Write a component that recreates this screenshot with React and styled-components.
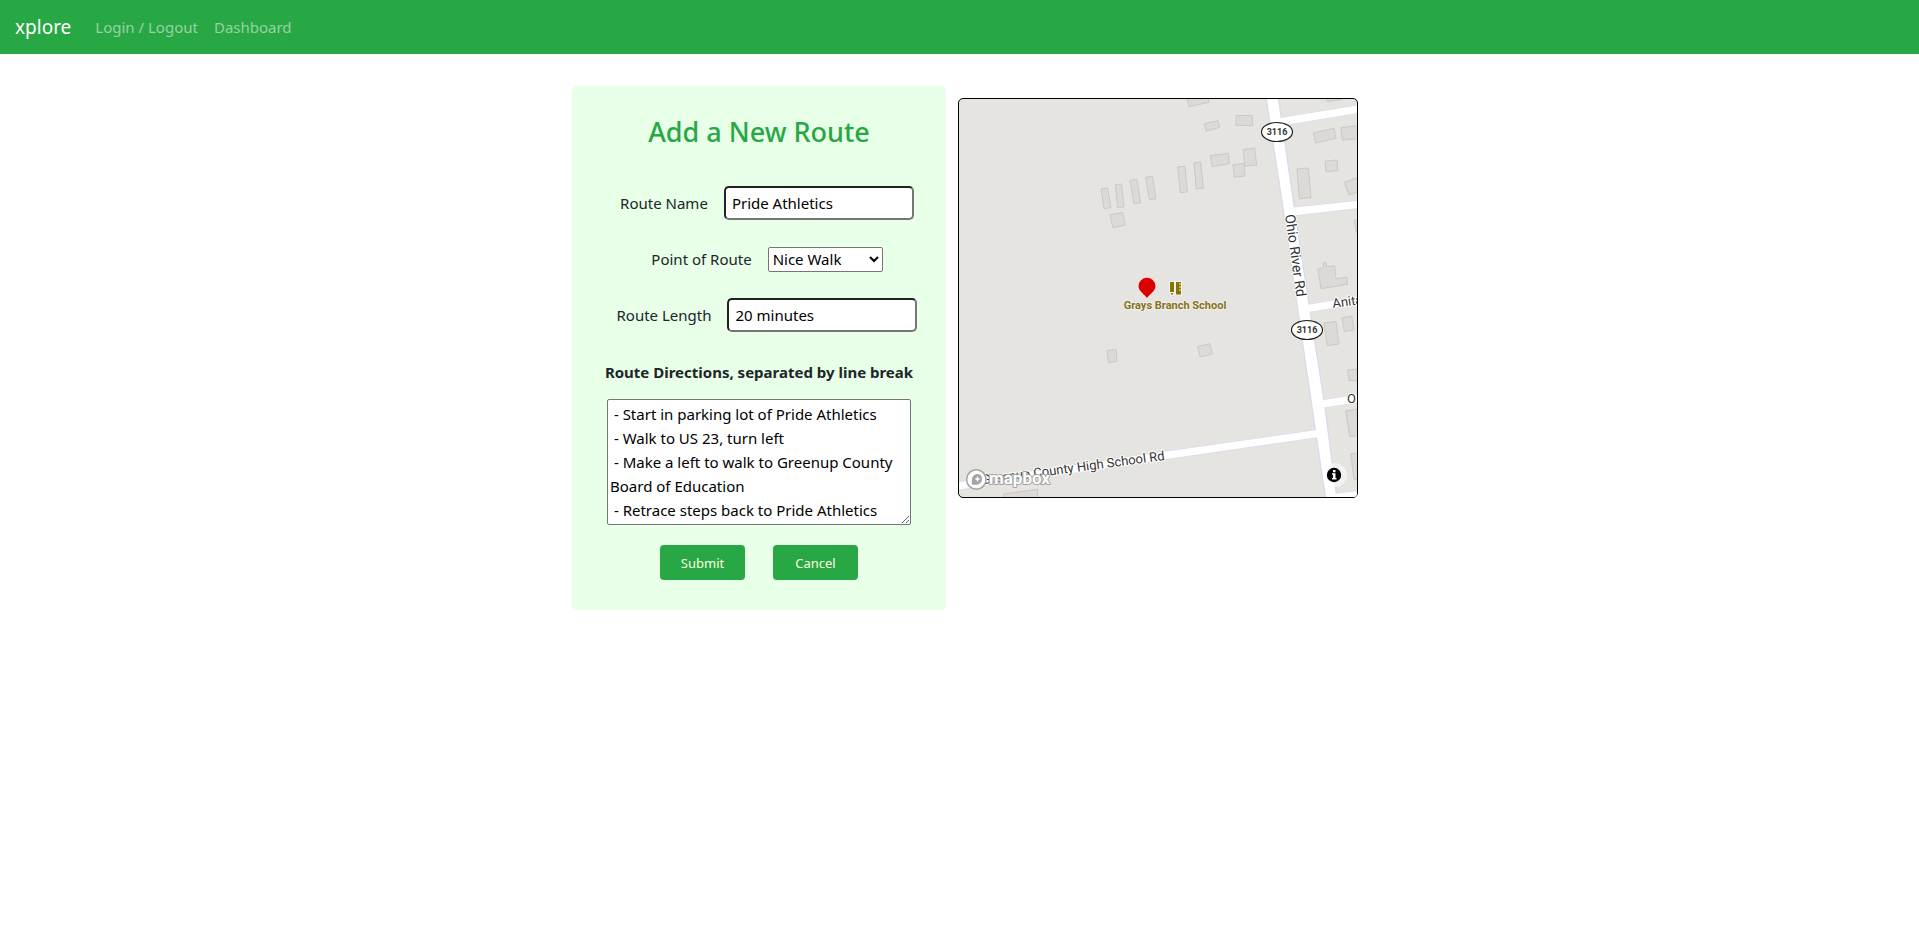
import React from "react";
import styled, { createGlobalStyle } from "styled-components";

const GlobalStyle = createGlobalStyle`
  *, *::before, *::after { box-sizing: border-box; }
  body {
    margin: 0;
    background: #fff;
    color: #212529;
    font: 400 15px/24px "Segoe UI", "Noto Sans", sans-serif;
  }
`;

const Navbar = styled.nav`
  display: flex;
  align-items: center;
  height: 54px;
  padding: 0 15px 1px;
  background: #28a745;
`;

const Brand = styled.a`
  margin-right: 16px;
  color: #fff;
  font-size: 19px;
  line-height: 30px;
  text-decoration: none;
`;

const NavLink = styled.a`
  padding: 8px;
  color: rgba(255, 255, 255, 0.5);
  text-decoration: none;
`;

const Main = styled.main`
  display: flex;
  justify-content: center;
  align-items: flex-start;
  gap: 12px;
  padding: 32px 0 32px 11px;
`;

const RouteForm = styled.form`
  display: flex;
  flex-direction: column;
  align-items: center;
  width: 374px;
  padding: 29px 24px 30px;
  border-radius: 5px;
  background: #e8ffe8;
`;

const Title = styled.h1`
  margin: 0 0 37px;
  color: #28a745;
  font-size: 27px;
  font-weight: 500;
  line-height: 34px;
`;

const FieldRow = styled.div`
  display: flex;
  align-items: center;
  height: 34px;
  margin-bottom: 22px;
`;

const FieldLabel = styled.label`
  margin: 0 16px;
`;

const TextInput = styled.input`
  width: 190px;
  height: 34px;
  padding: 1px 6px;
  border: 2px inset #767676;
  border-radius: 5px;
  background: #fff;
  color: #000;
  font: inherit;
`;

const PointSelect = styled.select`
  width: 115px;
  height: 25px;
  padding: 0;
  border: 1px solid #767676;
  border-radius: 2px;
  background: #fff;
  color: #000;
  font: inherit;
`;

const DirectionsLabel = styled.label`
  margin: 6px 0 15px;
  font-weight: 700;
  white-space: nowrap;
`;

const Directions = styled.textarea`
  display: block;
  width: 304px;
  height: 126px;
  padding: 2px;
  border: 1px solid #767676;
  border-radius: 2px;
  background: #fff;
  color: #000;
  font: inherit;
  overflow: hidden;
`;

const Actions = styled.div`
  display: flex;
  gap: 28px;
  margin-top: 20px;
`;

const ActionButton = styled.button`
  width: 85px;
  height: 35px;
  border: 0;
  border-radius: 4px;
  background: #28a745;
  color: #ffffe0;
  font: inherit;
  font-size: 13px;
`;

const MapFrame = styled.section`
  width: 400px;
  height: 400px;
  margin-top: 12px;
  border: 1px solid #000;
  border-radius: 5px;
  background: #e5e4e0;
  overflow: hidden;

  svg { display: block; }
`;

const MapText = styled.text`
  fill: ${(p) => p.$color || "#333"};
  stroke: ${(p) => p.$halo || "#fff"};
  stroke-width: 2px;
  stroke-linejoin: round;
  paint-order: stroke;
  font-family: Roboto, sans-serif;
  font-size: ${(p) => p.$size || 13}px;
  font-weight: ${(p) => p.$weight || 400};
`;

const northWest = [
  "453,297 473,294 483,353 462,356",
  "496,284 515,282 522,351 503,353",
  "540,271 560,268 572,338 552,341",
  "587,262 607,259 618,326 598,329",
  "480,375 518,367 526,405 489,413",
];

const northEast = [
  "80,20 144,18 147,37 87,50",
  "133,101 174,92 179,112 139,123",
  "229,76 278,77 277,107 228,106",
  "151,197 205,190 209,221 156,230",
  "249,179 284,174 290,225 255,229",
  "219,224 252,220 255,258 223,262",
  "53,231 75,229 82,306 61,308",
  "102,219 122,216 130,294 109,297",
  "460,129 522,115 528,145 467,159",
  "543,113 600,106 600,146 547,150",
  "495,214 531,210 533,242 498,245",
  "411,237 445,234 453,323 418,326",
  "553,277 600,260 600,305 567,314",
  "582,391 600,389 600,425 589,427",
  "500,25 545,20 545,28 502,35",
  "474,537 491,532 490,519 499,518 500,530 524,527 528,566 561,561 563,583 483,596",
];

const southWest = [
  "471,151 499,149 501,184 475,188",
  "160,582 262,568 264,600 162,600",
];

const southEast = [
  "113,140 150,131 157,162 121,171",
  "492,69 528,64 537,132 502,137",
  "546,54 575,48 582,89 553,95",
  "563,210 600,207 600,242 567,242",
  "557,332 600,327 600,407 569,410",
  "572,461 600,458 600,537 583,540",
];

const quadrants = [
  { id: "nw", shift: "-27 -27", shapes: northWest },
  { id: "ne", shift: "603 -27", shapes: northEast },
  { id: "sw", shift: "-27 603", shapes: southWest },
  { id: "se", shift: "603 603", shapes: southEast },
];

const sideRoads = [
  "960,58 1210,17 1210,39 965,80",
  "990,327 1210,304 1210,326 990,351",
  "1030,620 1210,590 1210,612 1030,642",
  "1080,905 1210,885 1210,908 1080,928",
  "1120,1185 1210,1175 1210,1200 1120,1200",
  "1080,992 618,1058 -10,1151 -10,1173 623,1080 1080,1014",
];

const mainRoad = "921,-5 975,346 1012,603 1069,993 1100,1200 1134,1200 1095,903 1048,603 1006,325 958,-5";

function RouteShield({ x, y }) {
  return (
    <g>
      <ellipse cx={x} cy={y} rx="15.5" ry="9.5" fill="#fff" stroke="#222" strokeWidth="1.200" />
      <MapText x={x} y={y + 3} $size={9} $weight={700} textAnchor="middle">3116</MapText>
    </g>
  );
}

function AreaMap() {
  return (
    <svg width="398" height="398" viewBox="0 0 398 398" role="img" aria-label="Map of the route">
      {quadrants.map(({ id, shift, shapes }) => (
        <g key={id} transform={`scale(.33333) translate(${shift})`} fill="#dcd9d6" stroke="#cbc8c5" strokeWidth="3">
          {shapes.map((points) => <polygon key={points} points={points} />)}
        </g>
      ))}
      <g transform="scale(.33333)" fill="#fff">
        <g stroke="#d9dbea" strokeWidth="4">
          {sideRoads.map((points) => <polygon key={points} points={points} />)}
          <polygon points={mainRoad} />
        </g>
        {sideRoads.map((points) => <polygon key={points} points={points} />)}
      </g>

      <MapText $size={14} transform="translate(326 116) rotate(82)">Ohio River Rd</MapText>
      <MapText textAnchor="end" transform="translate(206 361) rotate(-7.6)">Greenup County High School Rd</MapText>
      <MapText transform="translate(374 209) rotate(-8)">Anita</MapText>
      <MapText x="388" y="304">O</MapText>
      <RouteShield x={318} y={33} />
      <RouteShield x={348} y={231} />

      <MapText x="216" y="210" $size={11} $weight={700} $color="#857322" $halo="#efeee8" textAnchor="middle">
        Grays Branch School
      </MapText>
      <g stroke="#f4f3ee" strokeWidth="2" paintOrder="stroke" fill="#8a7400">
        <path d="M211 183h4v10h-4zM212 194h2v1.500h-2z" />
        <path d="M217 183h5v1.500h-2v1h2v2h-2v1h2v2h-2v1h2v4h-5z" />
      </g>
      <path d="M188 199c-1.200-2.600-8.500-6.700-8.500-11.800a8.500 8.500 0 0 1 17 0c0 5.100-7.300 9.200-8.500 11.800z" fill="#d00" />

      <circle cx="17.300" cy="380.500" r="9.700" fill="#fff" stroke="#a3a3a3" strokeWidth="1.500" />
      <path d="M13 385.500c-1-7 1.500-10.500 5.500-10.500a5 5 0 0 1 4.500 5c0 4.500-4 6.500-10 5.500z" fill="#a3a3a3" />
      <path d="m18.500 377 .9 2.100 2.100.9-2.100.9-.9 2.100-.9-2.100-2.100-.9 2.100-.9z" fill="#fff" />
      <MapText x="30" y="385" $size={17} $weight={700} $color="#fff" $halo="#a3a3a3">mapbox</MapText>

      <circle cx="376" cy="376" r="12" fill="#fff" fillOpacity=".5" />
      <circle cx="375" cy="376" r="7.200" />
      <path d="M374 371h2.500v2.200h-2.500zM373 374.200h3.500v4.800h1v1.500h-4.500v-1.500h1v-3.300h-1z" fill="#fff" />
    </svg>
  );
}

const directions = ` - Start in parking lot of Pride Athletics
 - Walk to US 23, turn left
 - Make a left to walk to Greenup County Board of Education
 - Retrace steps back to Pride Athletics`;

export default function App() {
  return (
    <>
      <GlobalStyle />
      <Navbar>
        <Brand href="#home">xplore</Brand>
        <NavLink href="#login">Login / Logout</NavLink>
        <NavLink href="#dashboard">Dashboard</NavLink>
      </Navbar>
      <Main>
        <RouteForm onSubmit={(e) => e.preventDefault()}>
          <Title>Add a New Route</Title>
          <FieldRow>
            <FieldLabel htmlFor="name">Route Name</FieldLabel>
            <TextInput id="name" type="text" defaultValue="Pride Athletics" />
          </FieldRow>
          <FieldRow>
            <FieldLabel htmlFor="point">Point of Route</FieldLabel>
            <PointSelect id="point" defaultValue="Nice Walk">
              <option>Nice Walk</option>
            </PointSelect>
          </FieldRow>
          <FieldRow>
            <FieldLabel htmlFor="length">Route Length</FieldLabel>
            <TextInput id="length" type="text" defaultValue="20 minutes" />
          </FieldRow>
          <DirectionsLabel htmlFor="directions">Route Directions, separated by line break</DirectionsLabel>
          <Directions id="directions" defaultValue={directions} />
          <Actions>
            <ActionButton type="submit">Submit</ActionButton>
            <ActionButton type="button">Cancel</ActionButton>
          </Actions>
        </RouteForm>
        <MapFrame>
          <AreaMap />
        </MapFrame>
      </Main>
    </>
  );
}
